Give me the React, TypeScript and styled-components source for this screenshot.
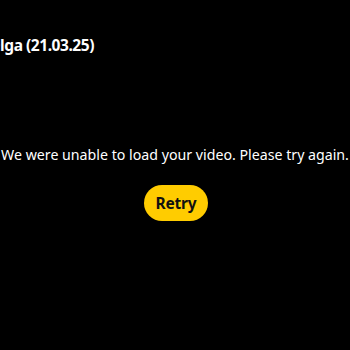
import React from "react";
import styled, { createGlobalStyle } from "styled-components";

const Global = createGlobalStyle`
  html, body { margin: 0; padding: 0; background: #000; }
  body { font-family: "Noto Sans", "Open Sans", sans-serif; color: #fff; }
`;

const Screen = styled.div`
  width: 350px;
  height: 350px;
  background: #000;
  display: flex;
  flex-direction: column;
  overflow: hidden;
`;

const Header = styled.div`
  display: flex;
  overflow: hidden;
  padding-top: 31px;
  height: 28px;
`;

const Title = styled.h1`
  margin: 0 0 0 -11.7px;
  font-size: 15.5px;
  font-weight: 700;
  letter-spacing: -0.45px;
  line-height: 28px;
  white-space: nowrap;
  color: #fff;
`;

const Body = styled.div`
  display: flex;
  flex-direction: column;
  align-items: center;
  padding-top: 84px;
  gap: 18px;
`;

const Message = styled.p`
  margin: 0;
  font-size: 14.2px;
  line-height: 24px;
  white-space: nowrap;
  color: #fff;
`;

const RetryButton = styled.button`
  height: 36px;
  padding: 0 12px;
  margin-left: 2px;
  border: none;
  border-radius: 18px;
  background: #ffcc00;
  color: #111;
  font-family: "Noto Sans", "Open Sans", sans-serif;
  font-size: 15.5px;
  font-weight: 700;
  letter-spacing: -0.2px;
  cursor: pointer;
`;

export default function App() {
  return (
    <>
      <Global />
      <Screen>
        <Header>
          <Title>Olga (21.03.25)</Title>
        </Header>
        <Body>
          <Message>We were unable to load your video. Please try again.</Message>
          <RetryButton>Retry</RetryButton>
        </Body>
      </Screen>
    </>
  );
}
